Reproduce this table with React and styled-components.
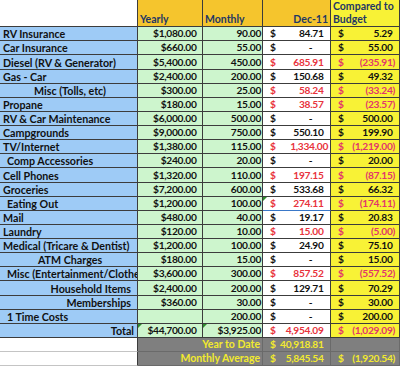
import React from 'react';
import styled, { createGlobalStyle, css } from 'styled-components';

const Global = createGlobalStyle`
  html, body { margin: 0; padding: 0; background: #ffffff; }
  body { font-family: "Lato", "Liberation Sans", sans-serif; }
`;

const COLORS = {
  blue: '#9ecbf6',
  green: '#cdf5cd',
  white: '#ffffff',
  yellow: '#f8f236',
  gold: '#f5c52d',
  gray: '#7f7f7f',
  line: '#3c3c3c',
  navy: '#1f3864',
  ink: '#111111',
  red: '#e8323c',
  pink: '#e2356c',
  sumText: '#f2ea2e',
};

const Sheet = styled.div`
  display: grid;
  width: 400px;
  grid-template-columns: 138px 65px 60px 68px 69px;
  grid-template-rows: 27px repeat(2, 14px) 15px repeat(7, 14px) 15px repeat(7, 14px) 15px repeat(5, 14px);
  font-family: "Lato", "Liberation Sans", sans-serif;
  font-weight: 700;
  font-size: 10.5px;
  color: ${COLORS.ink};
`;

const cellBase = css`
  position: relative;
  box-sizing: border-box;
  display: flex;
  align-items: flex-end;
  line-height: 13px;
  white-space: nowrap;
  overflow: hidden;
  border-right: 1px solid ${COLORS.line};
  border-bottom: 1px solid ${(p) => p.$bottom || COLORS.line};
`;

const numCss = css`
  font-size: 10.2px;
  letter-spacing: -0.3px;
`;

const flagCss = css`
  &::before {
    content: '';
    position: absolute;
    left: 0;
    top: 0;
    border-top: 4px solid #2e8b2e;
    border-right: 4px solid transparent;
  }
`;

const HeaderCell = styled.div`
  ${cellBase};
  flex-direction: column;
  justify-content: flex-end;
  align-items: ${(p) => (p.$right ? 'flex-end' : 'flex-start')};
  background: ${(p) => p.$bg};
  color: ${COLORS.navy};
  padding: 0 2px;
  line-height: 13px;
`;

const Label = styled.div`
  ${cellBase};
  background: ${COLORS.blue};
  font-size: 10.7px;
  justify-content: ${(p) => p.$align || 'flex-start'};
  padding-left: ${(p) => (p.$indent ? '7px' : '3px')};
  padding-right: ${(p) => (p.$align === 'flex-end' ? p.$rpad || '6px' : '0')};
`;

const Money = styled.div`
  ${cellBase};
  ${numCss};
  background: ${COLORS.green};
  justify-content: flex-end;
  padding-right: ${(p) => p.$pad || '3px'};
  ${(p) => p.$flag && flagCss};
`;

const Pad = styled.span`
  visibility: hidden;
`;

const Acct = styled.div`
  ${cellBase};
  ${numCss};
  background: ${(p) => p.$bg};
  color: ${(p) => p.$color || COLORS.ink};
  justify-content: space-between;
  padding-left: 7px;
  padding-right: ${(p) => (p.$tight ? '2px' : '4px')};
  ${(p) => p.$flag && flagCss};
`;

const Summary = styled.div`
  ${cellBase};
  background: ${COLORS.gray};
  color: ${COLORS.sumText};
  border-right-color: #6a6a6a;
  border-bottom-color: #6a6a6a;
  grid-column: ${(p) => p.$span || 'auto'};
  justify-content: flex-end;
  padding-right: 2px;
`;

const SummaryAcct = styled(Summary)`
  ${numCss};
  justify-content: space-between;
  padding-left: 7px;
  padding-right: 4px;
`;

const Blank = styled.div`
  ${cellBase};
  background: #ffffff;
  border-bottom-color: #c4c4c4;
`;

const AcctValue = ({ v, neg, tight }) => {
  if (v === '-') {
    return (
      <span>
        -<Pad>00)</Pad>
      </span>
    );
  }
  if (neg) return <span>({v})</span>;
  return (
    <span>
      {v}
      {!tight && <Pad>)</Pad>}
    </span>
  );
};

const rows = [
  { label: 'RV Insurance', y: '$1,080.00', m: '90.00', d: '84.71', c: '5.29' },
  { label: 'Car Insurance', y: '$660.00', m: '55.00', d: '-', c: '55.00' },
  { label: 'Diesel (RV & Generator)', y: '$5,400.00', m: '450.00', d: '685.91', dr: true, c: '235.91', neg: true },
  { label: 'Gas - Car', y: '$2,400.00', m: '200.00', d: '150.68', c: '49.32' },
  { label: 'Misc (Tolls, etc)', align: 'center', y: '$300.00', m: '25.00', d: '58.24', dr: true, c: '33.24', neg: true },
  { label: 'Propane', y: '$180.00', m: '15.00', d: '38.57', dr: true, c: '23.57', neg: true },
  { label: 'RV & Car Maintenance', y: '$6,000.00', m: '500.00', d: '-', c: '500.00' },
  { label: 'Campgrounds', y: '$9,000.00', m: '750.00', d: '550.10', c: '199.90' },
  { label: 'TV/Internet', y: '$1,380.00', m: '115.00', d: '1,334.00', dr: true, tight: true, c: '1,219.00', neg: true },
  { label: 'Comp Accessories', indent: true, y: '$240.00', m: '20.00', d: '-', c: '20.00' },
  { label: 'Cell Phones', y: '$1,320.00', m: '110.00', d: '197.15', dr: true, c: '87.15', neg: true },
  { label: 'Groceries', y: '$7,200.00', m: '600.00', d: '533.68', c: '66.32' },
  { label: 'Eating Out', indent: true, y: '$1,200.00', m: '100.00', d: '274.11', dr: true, dflag: true, dbottom: '#3a78c8', c: '174.11', neg: true },
  { label: 'Mail', y: '$480.00', m: '40.00', d: '19.17', c: '20.83' },
  { label: 'Laundry', y: '$120.00', m: '10.00', d: '15.00', dr: true, c: '5.00', neg: true },
  { label: 'Medical (Tricare & Dentist)', y: '$1,200.00', m: '100.00', d: '24.90', c: '75.10' },
  { label: 'ATM Charges', align: 'center', y: '$180.00', m: '15.00', d: '-', c: '15.00' },
  { label: 'Misc (Entertainment/Clothes)', indent: true, y: '$3,600.00', m: '300.00', d: '857.52', dr: true, c: '557.52', neg: true },
  { label: 'Household Items', align: 'flex-end', y: '$2,400.00', m: '200.00', d: '129.71', c: '70.29' },
  { label: 'Memberships', align: 'flex-end', y: '$360.00', m: '30.00', d: '-', c: '30.00' },
  { label: '1 Time Costs', indent: true, y: '', m: '200.00', d: '-', c: '200.00' },
  { label: 'Total', align: 'flex-end', rpad: '3px', y: '$44,700.00', yflag: true, m: '$3,925.00', mflag: true, d: '4,954.09', dr: true, c: '1,029.09', neg: true },
];

export default function App() {
  return (
    <>
      <Global />
      <Sheet>
        <HeaderCell $bg={COLORS.white} />
        <HeaderCell $bg={COLORS.gold}>Yearly</HeaderCell>
        <HeaderCell $bg={COLORS.gold}>Monthly</HeaderCell>
        <HeaderCell $bg={COLORS.gold} $right>Dec-11</HeaderCell>
        <HeaderCell $bg={COLORS.yellow}>
          <span>Compared to</span>
          <span>Budget</span>
        </HeaderCell>

        {rows.map((r) => (
          <React.Fragment key={r.label}>
            <Label $align={r.align} $indent={r.indent} $rpad={r.rpad}>
              {r.label}
            </Label>
            <Money $pad="3px" $flag={r.yflag}>
              {r.y}
              {r.y && <Pad>)</Pad>}
            </Money>
            <Money $pad="1px" $flag={r.mflag}>{r.m}</Money>
            <Acct
              $bg={COLORS.white}
              $color={r.dr ? COLORS.red : COLORS.ink}
              $tight={r.tight}
              $flag={r.dflag}
              $bottom={r.dbottom}
            >
              <span>$</span>
              <AcctValue v={r.d} tight={r.tight} />
            </Acct>
            <Acct $bg={COLORS.yellow} $color={r.neg ? COLORS.pink : COLORS.ink}>
              <span>$</span>
              <AcctValue v={r.c} neg={r.neg} />
            </Acct>
          </React.Fragment>
        ))}

        <Blank />
        <Summary $span="span 2">Year to Date</Summary>
        <SummaryAcct>
          <span>$</span>
          <span>
            40,918.81<Pad>)</Pad>
          </span>
        </SummaryAcct>
        <Summary />

        <Blank />
        <Summary $span="span 2">Monthly Average</Summary>
        <SummaryAcct>
          <span>$</span>
          <span>
            5,845.54<Pad>)</Pad>
          </span>
        </SummaryAcct>
        <SummaryAcct>
          <span>$</span>
          <span>(1,920.54)</span>
        </SummaryAcct>
      </Sheet>
    </>
  );
}
